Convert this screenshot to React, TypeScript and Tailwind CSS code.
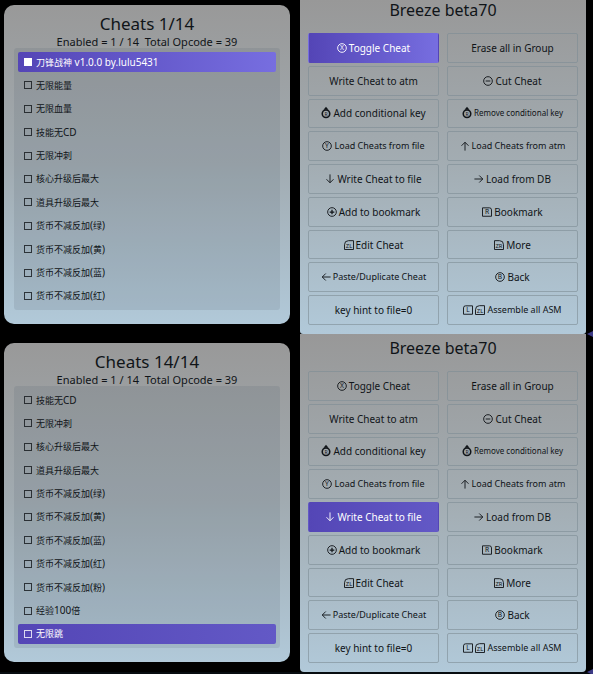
import type { ReactNode } from 'react';
import clsx from 'clsx';

type IconName =
  | 'x' | 'y' | 'b' | 'minus' | 'plus' | 'stick' | 'up' | 'down' | 'left' | 'right' | 'r' | 'l' | 'zl' | 'zr';

interface Action {
  label: string;
  icons?: IconName[];
  size?: 'sm' | 'xs';
}

const ACTIONS: Action[] = [
  { label: 'Toggle Cheat', icons: ['x'] },
  { label: 'Erase all in Group' },
  { label: 'Write Cheat to atm' },
  { label: 'Cut Cheat', icons: ['minus'] },
  { label: 'Add conditional key', icons: ['stick'] },
  { label: 'Remove conditional key', icons: ['stick'], size: 'xs' },
  { label: 'Load Cheats from file', icons: ['y'], size: 'sm' },
  { label: 'Load Cheats from atm', icons: ['up'], size: 'sm' },
  { label: 'Write Cheat to file', icons: ['down'] },
  { label: 'Load from DB', icons: ['right'] },
  { label: 'Add to bookmark', icons: ['plus'] },
  { label: 'Bookmark', icons: ['r'] },
  { label: 'Edit Cheat', icons: ['zl'] },
  { label: 'More', icons: ['zr'] },
  { label: 'Paste/Duplicate Cheat', icons: ['left'], size: 'sm' },
  { label: 'Back', icons: ['b'] },
  { label: 'key hint to file=0' },
  { label: 'Assemble all ASM', icons: ['l', 'zl'], size: 'sm' },
];

const FIRST_PAGE = [
  '刀锋战神 v1.0.0 by.lulu5431',
  '无限能量',
  '无限血量',
  '技能无CD',
  '无限冲刺',
  '核心升级后最大',
  '道具升级后最大',
  '货币不减反加(绿)',
  '货币不减反加(黄)',
  '货币不减反加(蓝)',
  '货币不减反加(红)',
];

const LAST_PAGE = [
  '技能无CD',
  '无限冲刺',
  '核心升级后最大',
  '道具升级后最大',
  '货币不减反加(绿)',
  '货币不减反加(黄)',
  '货币不减反加(蓝)',
  '货币不减反加(红)',
  '货币不减反加(粉)',
  '经验100倍',
  '无限跳',
];

const letter = (text: string, size = 8, y = 8.9) => (
  <text x="6" y={y} fontSize={size} textAnchor="middle" fill="currentColor" stroke="none">
    {text}
  </text>
);

const ring = <circle cx="6" cy="6" r="5.2" />;

// Controller button glyphs on a 12x12 grid
const GLYPHS: Record<IconName, ReactNode> = {
  x: <>{ring}{letter('X')}</>,
  y: <>{ring}{letter('Y')}</>,
  b: <>{ring}{letter('B')}</>,
  minus: <>{ring}<path d="M3.2 6h5.6" /></>,
  plus: <>{ring}<path d="M3.2 6h5.6M6 3.2v5.6" strokeWidth="1.5" /></>,
  stick: (
    <>
      <path d="M6 -1.5L9 2.2H3Z" fill="currentColor" stroke="none" />
      <circle cx="6" cy="6.8" r="4.5" strokeWidth="1.9" />
      {letter('R', 6, 9)}
    </>
  ),
  up: <path d="M6 11.5V1.5M1.8 5.7L6 1.5l4.2 4.2" />,
  down: <path d="M6 .5v10M1.8 6.3L6 10.5l4.2-4.2" />,
  left: <path d="M11.5 6H1.5M5.7 1.8L1.5 6l4.2 4.2" />,
  right: <path d="M.5 6h10M6.3 1.8L10.5 6l-4.2 4.2" />,
  r: <><path d="M.6 1H8.9Q11.4 1 11.4 3.5V11.1H.6Z" />{letter('R')}</>,
  l: <><path d="M11.4 1H3.1Q.6 1 .6 3.5V11.1H11.4Z" />{letter('L')}</>,
  zl: <><path d="M11.4 .8H5.4Q.6 .8 .6 5.6V11.4H11.4Z" />{letter('ZL', 7, 9.4)}</>,
  zr: <><path d="M.6 .8H6.6Q11.4 .8 11.4 5.6V11.4H.6Z" />{letter('ZR', 7, 9.4)}</>,
};

const Glyph = ({ name }: { name: IconName }) => (
  <svg
    viewBox="0 0 12 12"
    className="size-[10px] shrink-0 overflow-visible"
    fill="none"
    stroke="currentColor"
    strokeWidth="1.1"
    aria-hidden="true"
  >
    {GLYPHS[name]}
  </svg>
);

// Han characters are set one size smaller than the Latin around them
const MixedText = ({ text }: { text: string }) => (
  <span className="text-[10px] leading-[14px] whitespace-pre">
    {text.split(/([\u4e00-\u9fff]+)/).filter(Boolean).map((run, i) => (
      <span key={i} className={/[\u4e00-\u9fff]/.test(run) ? 'text-[9px]' : undefined}>{run}</span>
    ))}
  </span>
);

interface SceneProps {
  title: string;
  cheats: string[];
  selected: number;
  enabled?: number;
  activeAction: string;
  first?: boolean;
}

const Scene = ({ title, cheats, selected, enabled, activeAction, first }: SceneProps) => {
  const highlight = first
    ? 'bg-linear-to-r from-[#5445b6] to-[#776ee0] text-white'
    : 'bg-linear-to-r from-[#5446b6] to-[#6359c6] text-white';

  return (
    <section className="relative grid grid-cols-2 items-start gap-[10px] pl-1 pr-[7px]">
      {/* Cheat list */}
      <div
        className={clsx(
          'rounded-[10px] bg-linear-to-b from-[#999999] via-[#a1abb1] to-[#b1c9d9] px-[10px] pt-2 pb-[14px]',
          first ? 'mt-[5px]' : 'mt-[9px]',
        )}
      >
        <h1 className="text-center text-[17px] leading-[22px]">{title}</h1>
        <p className="text-center text-[11px] leading-[13px] whitespace-pre">{'Enabled = 1 / 14  Total Opcode = 39'}</p>
        <ul className="flex h-[262px] flex-col justify-between rounded-[3px] bg-[#50606a]/15 p-1">
          {cheats.map((cheat, i) => (
            <li key={cheat}>
              <label
                className={clsx('flex h-[20px] items-center gap-1 rounded-[2px] px-[6px]', i === selected && highlight)}
              >
                <input
                  type="checkbox"
                  defaultChecked={i === enabled}
                  className="size-2 shrink-0 appearance-none border border-current/80 checked:bg-current"
                />
                <MixedText text={cheat} />
              </label>
            </li>
          ))}
        </ul>
      </div>

      {/* Actions */}
      <div
        className={clsx(
          'bg-linear-to-b from-[#989898] via-[#a3adb3] to-[#b1c9d9] px-2 pb-[9px]',
          first ? 'rounded-b-[3px]' : 'rounded-b-[4px] pt-[4px]',
        )}
      >
        <h2 className="pb-[13px] text-center text-[16px] leading-[20px]">Breeze beta70</h2>
        <div className="grid h-[292px] grid-cols-2 grid-rows-9 gap-x-2 gap-y-[3px]">
          {ACTIONS.map(({ label, icons = [], size }) => (
            <button
              key={label}
              type="button"
              className={clsx(
                'flex min-w-0 items-center justify-center gap-[2px] rounded-[2px] border leading-3 whitespace-nowrap',
                size === 'xs' ? 'text-[8px]' : size === 'sm' ? 'text-[9px]' : 'text-[10px]',
                label === activeAction ? [highlight, 'border-transparent'] : 'border-[#7d8c95]/60',
              )}
            >
              {icons.map((name) => <Glyph key={name} name={name} />)}
              <span>{label}</span>
            </button>
          ))}
        </div>
      </div>

      {/* Spark at the screen edge */}
      <svg viewBox="0 0 6 6" className="absolute right-0 -bottom-[3px] size-[6px]" aria-hidden="true">
        <path d="M0 3L6 0V6Z" fill="#3d3a86" />
      </svg>
    </section>
  );
};

export default function App() {
  return (
    <main className="flex min-h-screen flex-col overflow-hidden bg-black font-['Noto_Sans','Noto_Sans_CJK_SC',sans-serif] text-[#101418]">
      <Scene title="Cheats 1/14" cheats={FIRST_PAGE} selected={0} enabled={0} activeAction="Toggle Cheat" first />
      <Scene title="Cheats 14/14" cheats={LAST_PAGE} selected={10} activeAction="Write Cheat to file" />
      <div className="grow bg-[#070c10]" />
    </main>
  );
}
